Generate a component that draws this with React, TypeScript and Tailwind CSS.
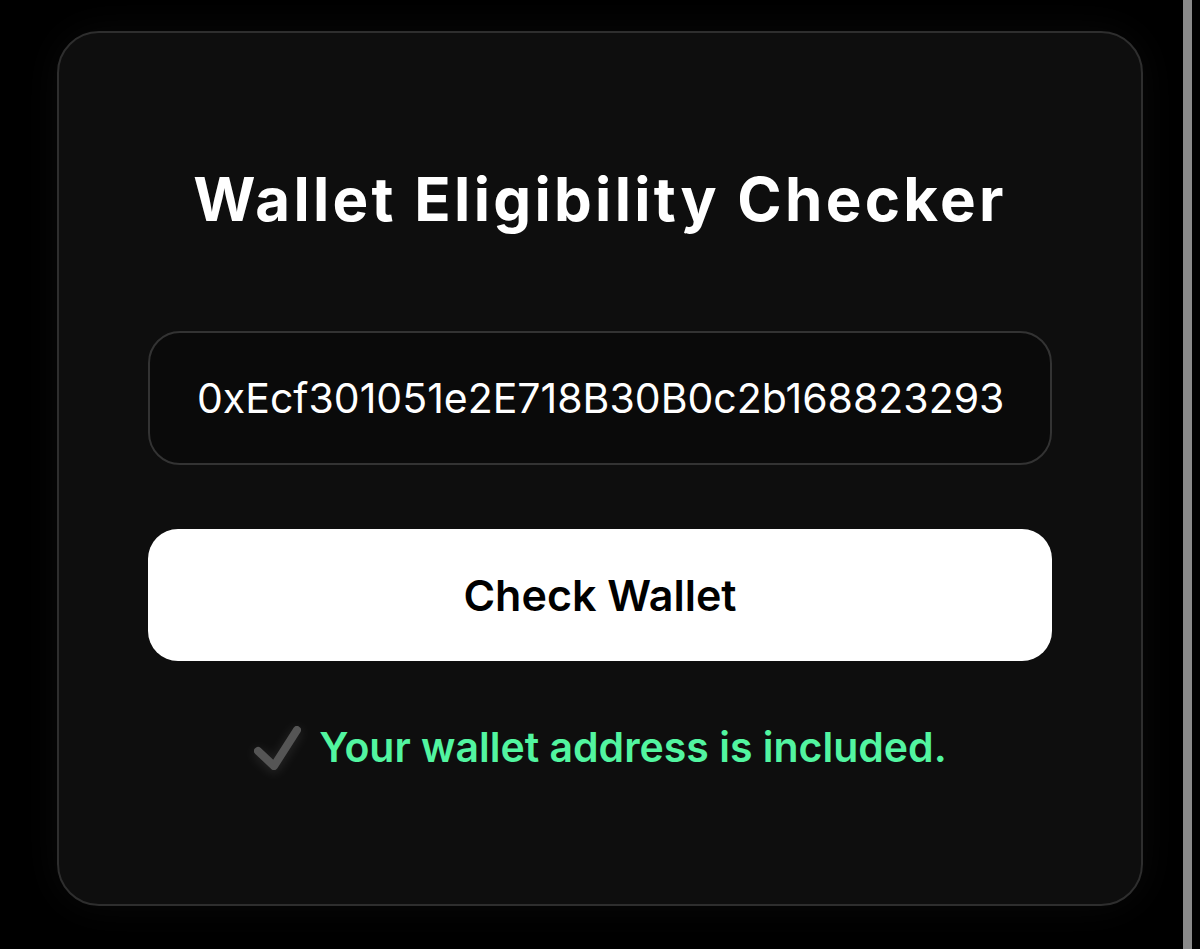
import React from 'react'

const font = { fontFamily: 'Inter, "Noto Sans", sans-serif' }

function CheckMark() {
  return (
    <svg
      className="h-[46px] w-[48px] drop-shadow-[0_2px_6px_rgba(255,255,255,0.12)]"
      viewBox="0 0 48 46"
      fill="none"
    >
      <polyline
        points="5,26 21,41 44,5"
        stroke="#555555"
        strokeWidth="8"
        strokeLinecap="round"
        strokeLinejoin="round"
      />
    </svg>
  )
}

export default function App() {
  return (
    <div className="flex min-h-[949px] w-[1200px] bg-black" style={font}>
      <div className="flex w-[1183px] flex-col pl-[57px] pt-[31px]">
        <div className="flex h-[875px] w-[1086px] flex-col items-center rounded-[42px] border-2 border-[#2e2e2e] bg-[#0e0e0e] px-[89px] shadow-[0_0_40px_rgba(255,255,255,0.04)]">
          <h1 className="mt-[130px] text-[60px] font-bold leading-[72px] tracking-[0.055em] text-white">
            Wallet Eligibility Checker
          </h1>

          <input
            readOnly
            defaultValue="0xEcf301051e2E718B30B0c2b168823293"
            className="mt-[96px] h-[134px] w-full rounded-[32px] border-2 border-[#333333] bg-[#0a0a0a] px-[47px] text-[41px] text-white outline-none"
          />

          <button className="mt-[64px] h-[132px] w-full rounded-[30px] bg-white text-[43px] font-semibold text-black">
            Check Wallet
          </button>

          <div className="mt-[56px] flex items-center gap-[18px]">
            <CheckMark />
            <span className="text-[41px] font-semibold text-[#52f5a0]">
              Your wallet address is included.
            </span>
          </div>
        </div>
      </div>
      <div className="w-[9px] bg-[#8a8a8a]" />
    </div>
  )
}
